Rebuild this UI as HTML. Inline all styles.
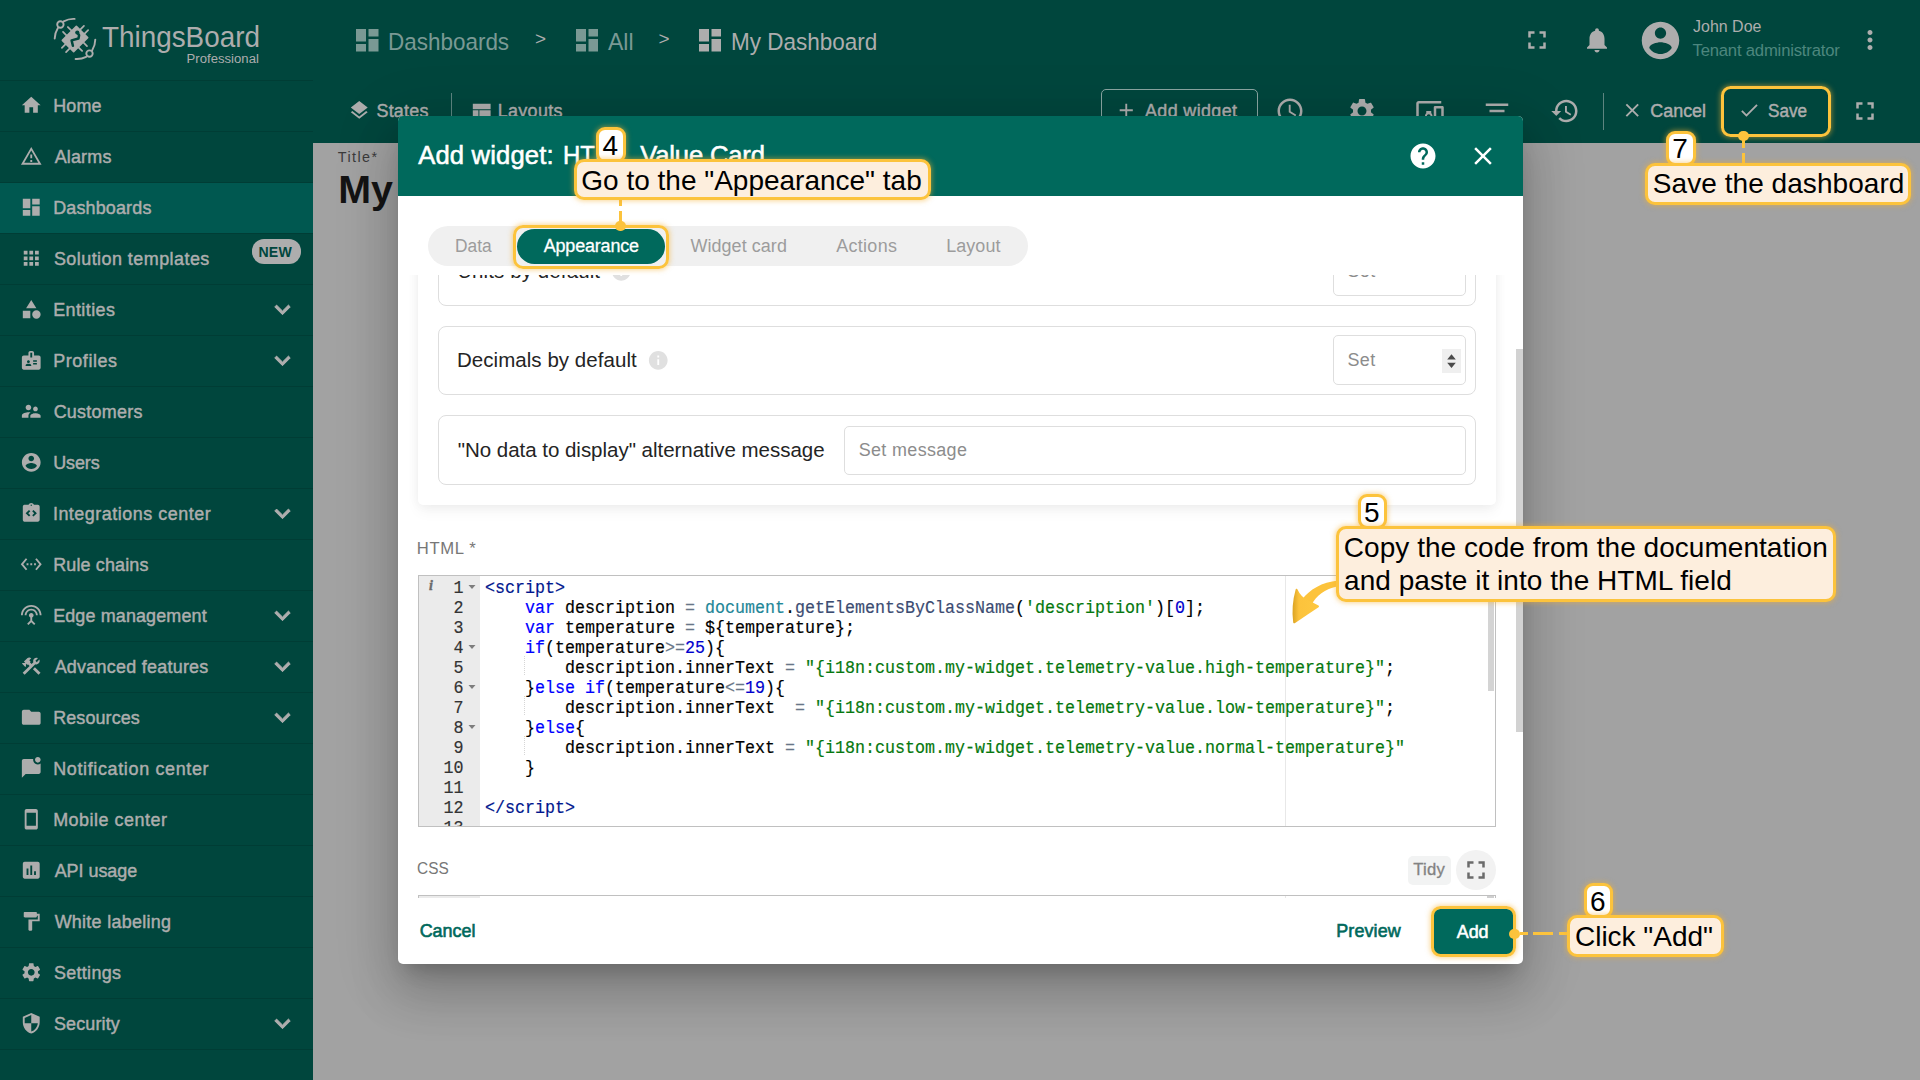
<!DOCTYPE html>
<html lang="en">
<head>
<meta charset="utf-8">
<title>ThingsBoard - Add widget</title>
<style>
html,body{margin:0;padding:0;}
body{width:1920px;height:1080px;overflow:hidden;position:relative;background:#a2a2a2;font-family:"Liberation Sans",sans-serif;}
.t{position:absolute;white-space:pre;display:block;}
.ic{position:absolute;display:block;}
.abs{position:absolute;}
.sans{font-family:"Liberation Sans",sans-serif;}
.mono{font-family:"Liberation Mono",monospace;}
.serif{font-family:"Liberation Serif",serif;}
.cl{position:absolute;height:20px;line-height:20px;font-size:19.0px;white-space:pre;transform:scaleX(0.8770);transform-origin:0 0;-webkit-text-stroke:0.2px currentColor;}

</style>
</head>
<body>
<nav style="position:absolute;left:0;top:0;width:313px;height:1080px;background:#00463d;">
<svg class="ic" style="left:50px;top:12px" width="52" height="52" viewBox="50 12 52 52" fill="none" stroke="#adadad" stroke-width="1.9" stroke-linecap="round">
<path d="M54.7 38.6 A20.3 20.3 0 0 1 57.9 28"/><path d="M63.7 21.3 A20.3 20.3 0 0 1 74.6 18.9"/>
<circle cx="60.4" cy="24.5" r="3.2"/>
<path d="M95.3 39.6 A20.3 20.3 0 0 1 92.2 50.2"/><path d="M86.2 56.8 A20.3 20.3 0 0 1 75.6 59"/>
<circle cx="89.5" cy="53.6" r="3.2"/>
<g transform="translate(75 39) rotate(-45)">
<rect x="-10.7" y="-8.8" width="21.4" height="17.6" rx="0.8" fill="#adadad" stroke="none"/>
<path stroke-width="1.75" d="M-3.45 -8v-5.5M3.45 -8v-5.5M-3.45 8v5.5M3.45 8v5.5M-10 -2.95h-5.6M-10 2.95h-5.6M10 -2.95h5.6M10 2.95h5.6"/>
</g>
<path d="M77.2 32.300 L79.100 35.200 L78.500 38.500 L71.600 40.400 L72.900 45.800" stroke="#00463d" stroke-width="2.5" stroke-linejoin="round"/>
<circle cx="77.300" cy="32.600" r="2.100" fill="#00463d" stroke="none"/>
</svg>
<span id="t0" class="t sans" style="left:101.78px;top:22.77px;font-size:29.21px;line-height:29.21px;font-weight:400;color:#adadad;letter-spacing:0.000px;transform:scaleX(0.9540);transform-origin:0 0;">ThingsBoard</span>
<span id="t1" class="t sans" style="left:186.50px;top:51.69px;font-size:13.12px;line-height:13.12px;font-weight:400;color:#adadad;letter-spacing:0.023px;">Professional</span>
<div style="position:absolute;left:0px;top:80px;width:313px;height:1px;background:#003d35;"></div>
<svg class="ic" style="left:20.00px;top:94.25px;" width="22.5" height="22.5" viewBox="0 0 24 24"><path fill="#adadad" d="M10 20v-6h4v6h5v-8h3L12 3 2 12h3v8z"/></svg>
<span id="t2" class="t sans" style="left:53.15px;top:97.91px;font-size:17.94px;line-height:17.94px;font-weight:400;color:#adadad;letter-spacing:0.200px;-webkit-text-stroke:0.45px #adadad;">Home</span>
<div style="position:absolute;left:0px;top:131px;width:313px;height:1px;background:#003d35;"></div>
<svg class="ic" style="left:20.00px;top:145.25px;" width="22.5" height="22.5" viewBox="0 0 24 24"><path fill="#adadad" d="M12 5.99L19.53 19H4.47L12 5.99M12 2L1 21h22L12 2zm1 14h-2v2h2v-2zm0-6h-2v4h2v-4z"/></svg>
<span id="t3" class="t sans" style="left:54.65px;top:148.91px;font-size:17.94px;line-height:17.94px;font-weight:400;color:#adadad;letter-spacing:0.180px;-webkit-text-stroke:0.45px #adadad;">Alarms</span>
<div style="position:absolute;left:0px;top:183px;width:313px;height:50px;background:#005850;"></div>
<div style="position:absolute;left:0px;top:182px;width:313px;height:1px;background:#003d35;"></div>
<svg class="ic" style="left:20.00px;top:196.25px;" width="22.5" height="22.5" viewBox="0 0 24 24"><path fill="#adadad" d="M3 13h8V3H3v10zm0 8h8v-6H3v6zm10 0h8V11h-8v10zm0-18v6h8V3h-8z"/></svg>
<span id="t4" class="t sans" style="left:53.15px;top:199.91px;font-size:17.94px;line-height:17.94px;font-weight:400;color:#adadad;letter-spacing:0.167px;-webkit-text-stroke:0.45px #adadad;">Dashboards</span>
<div style="position:absolute;left:0px;top:233px;width:313px;height:1px;background:#003d35;"></div>
<svg class="ic" style="left:20.00px;top:247.25px;" width="22.5" height="22.5" viewBox="0 0 24 24"><path fill="#adadad" d="M4 8h4V4H4v4zm6 12h4v-4h-4v4zm-6 0h4v-4H4v4zm0-6h4v-4H4v4zm6 0h4v-4h-4v4zm6-10v4h4V4h-4zm-6 4h4V4h-4v4zm6 6h4v-4h-4v4zm0 6h4v-4h-4v4z"/></svg>
<span id="t5" class="t sans" style="left:53.90px;top:250.91px;font-size:17.94px;line-height:17.94px;font-weight:400;color:#adadad;letter-spacing:0.462px;-webkit-text-stroke:0.45px #adadad;">Solution templates</span>
<div style="position:absolute;left:0px;top:284px;width:313px;height:1px;background:#003d35;"></div>
<svg class="ic" style="left:20.00px;top:298.25px;" width="22.5" height="22.5" viewBox="0 0 24 24"><path fill="#adadad" d="M12 2l-5.5 9h11zM17.5 13a4.5 4.5 0 1 0 0 9a4.5 4.5 0 1 0 0-9zM3 13.5h8v8H3z"/></svg>
<span id="t6" class="t sans" style="left:53.15px;top:301.91px;font-size:17.94px;line-height:17.94px;font-weight:400;color:#adadad;letter-spacing:0.421px;-webkit-text-stroke:0.45px #adadad;">Entities</span>
<svg class="ic" style="left:267.25px;top:294.00px" width="31" height="31" viewBox="0 0 24 24"><path fill="#adadad" stroke="#adadad" stroke-width="0.75" stroke-linejoin="miter" d="M16.59 8.59L12 13.17 7.41 8.59 6 10l6 6 6-6z"/></svg>
<div style="position:absolute;left:0px;top:335px;width:313px;height:1px;background:#003d35;"></div>
<svg class="ic" style="left:20.00px;top:349.25px;" width="22.5" height="22.5" viewBox="0 0 24 24"><path fill="#adadad" d="M20 7h-5V4c0-1.1-.9-2-2-2h-2c-1.1 0-2 .9-2 2v3H4c-1.1 0-2 .9-2 2v11c0 1.1.9 2 2 2h16c1.1 0 2-.9 2-2V9c0-1.1-.9-2-2-2zM9 12c.83 0 1.5.67 1.5 1.5S9.83 15 9 15s-1.5-.67-1.5-1.5S8.17 12 9 12zm3 6H6v-.75c0-1 2-1.5 3-1.5s3 .5 3 1.5V18zm1-9h-2V4h2v5zm5 7.5h-4V15h4v1.5zm0-3h-4V12h4v1.5z"/></svg>
<span id="t7" class="t sans" style="left:53.15px;top:352.91px;font-size:17.94px;line-height:17.94px;font-weight:400;color:#adadad;letter-spacing:0.586px;-webkit-text-stroke:0.45px #adadad;">Profiles</span>
<svg class="ic" style="left:267.25px;top:345.00px" width="31" height="31" viewBox="0 0 24 24"><path fill="#adadad" stroke="#adadad" stroke-width="0.75" stroke-linejoin="miter" d="M16.59 8.59L12 13.17 7.41 8.59 6 10l6 6 6-6z"/></svg>
<div style="position:absolute;left:0px;top:386px;width:313px;height:1px;background:#003d35;"></div>
<svg class="ic" style="left:20.00px;top:400.25px;" width="22.5" height="22.5" viewBox="0 0 24 24"><path fill="#adadad" d="M16.5 12c1.38 0 2.49-1.12 2.49-2.5S17.88 7 16.5 7C15.12 7 14 8.12 14 9.5s1.12 2.5 2.5 2.5zM9 11c1.66 0 2.99-1.34 2.99-3S10.66 5 9 5C7.34 5 6 6.34 6 8s1.34 3 3 3zm7.5 3c-1.83 0-5.5.92-5.5 2.75V19h11v-2.25c0-1.83-3.67-2.75-5.5-2.75zM9 13c-2.33 0-7 1.17-7 3.5V19h7v-2.25c0-.85.33-2.34 2.37-3.47C10.5 13.1 9.66 13 9 13z"/></svg>
<span id="t8" class="t sans" style="left:53.65px;top:403.91px;font-size:17.94px;line-height:17.94px;font-weight:400;color:#adadad;letter-spacing:0.262px;-webkit-text-stroke:0.45px #adadad;">Customers</span>
<div style="position:absolute;left:0px;top:437px;width:313px;height:1px;background:#003d35;"></div>
<svg class="ic" style="left:20.00px;top:451.25px;" width="22.5" height="22.5" viewBox="0 0 24 24"><path fill="#adadad" d="M12 2C6.48 2 2 6.48 2 12s4.48 10 10 10 10-4.48 10-10S17.52 2 12 2zm0 3c1.66 0 3 1.34 3 3s-1.34 3-3 3-3-1.34-3-3 1.34-3 3-3zm0 14.2c-2.5 0-4.71-1.28-6-3.22.03-1.99 4-3.08 6-3.08 1.99 0 5.97 1.09 6 3.08-1.29 1.94-3.5 3.22-6 3.22z"/></svg>
<span id="t9" class="t sans" style="left:53.15px;top:454.91px;font-size:17.94px;line-height:17.94px;font-weight:400;color:#adadad;letter-spacing:-0.062px;-webkit-text-stroke:0.45px #adadad;">Users</span>
<div style="position:absolute;left:0px;top:488px;width:313px;height:1px;background:#003d35;"></div>
<svg class="ic" style="left:20.00px;top:502.25px;" width="22.5" height="22.5" viewBox="0 0 24 24"><path fill="#adadad" d="M19 3h-4.18C14.4 1.84 13.3 1 12 1s-2.4.84-2.82 2H5c-.14 0-.27.01-.4.04-.39.08-.74.28-1.01.55-.18.18-.33.4-.43.64-.1.23-.16.49-.16.77v14c0 .27.06.54.16.78s.25.45.43.64c.27.27.62.47 1.01.55.13.02.26.03.4.03h14c1.1 0 2-.9 2-2V5c0-1.1-.9-2-2-2zM11 14.17l-1.41 1.42L6 12l3.59-3.59L11 9.83 8.83 12 11 14.17zm1-9.92c-.41 0-.75-.34-.75-.75s.34-.75.75-.75.75.34.75.75-.34.75-.75.75zm2.41 11.34L13 14.17 15.17 12 13 9.83l1.41-1.42L18 12l-3.59 3.59z"/></svg>
<span id="t10" class="t sans" style="left:52.90px;top:505.91px;font-size:17.94px;line-height:17.94px;font-weight:400;color:#adadad;letter-spacing:0.511px;-webkit-text-stroke:0.45px #adadad;">Integrations center</span>
<svg class="ic" style="left:267.25px;top:498.00px" width="31" height="31" viewBox="0 0 24 24"><path fill="#adadad" stroke="#adadad" stroke-width="0.75" stroke-linejoin="miter" d="M16.59 8.59L12 13.17 7.41 8.59 6 10l6 6 6-6z"/></svg>
<div style="position:absolute;left:0px;top:539px;width:313px;height:1px;background:#003d35;"></div>
<svg class="ic" style="left:20.00px;top:553.25px;" width="22.5" height="22.5" viewBox="0 0 24 24"><path fill="#adadad" d="M7.77 6.76L6.23 5.48.82 12l5.41 6.52 1.54-1.28L3.42 12l4.35-5.24zM7 13h2v-2H7v2zm10-2h-2v2h2v-2zm-6 2h2v-2h-2v2zm6.77-7.52l-1.54 1.28L20.58 12l-4.35 5.24 1.54 1.28L23.18 12l-5.41-6.52z"/></svg>
<span id="t11" class="t sans" style="left:53.15px;top:556.91px;font-size:17.94px;line-height:17.94px;font-weight:400;color:#adadad;letter-spacing:0.160px;-webkit-text-stroke:0.45px #adadad;">Rule chains</span>
<div style="position:absolute;left:0px;top:590px;width:313px;height:1px;background:#003d35;"></div>
<svg class="ic" style="left:20.00px;top:604.25px;" width="22.5" height="22.5" viewBox="0 0 24 24"><path fill="#adadad" d="M12 5c-3.87 0-7 3.13-7 7h2c0-2.76 2.24-5 5-5s5 2.24 5 5h2c0-3.87-3.13-7-7-7zm1 9.29c.88-.39 1.5-1.26 1.5-2.29 0-1.38-1.12-2.5-2.5-2.5S9.5 10.62 9.5 12c0 1.02.62 1.9 1.5 2.29v3.3L7.59 21 9 22.41l3-3 3 3L16.41 21 13 17.59v-3.3zM12 1C5.93 1 1 5.93 1 12h2c0-4.97 4.03-9 9-9s9 4.03 9 9h2c0-6.07-4.93-11-11-11z"/></svg>
<span id="t12" class="t sans" style="left:53.15px;top:607.91px;font-size:17.94px;line-height:17.94px;font-weight:400;color:#adadad;letter-spacing:0.136px;-webkit-text-stroke:0.45px #adadad;">Edge management</span>
<svg class="ic" style="left:267.25px;top:600.00px" width="31" height="31" viewBox="0 0 24 24"><path fill="#adadad" stroke="#adadad" stroke-width="0.75" stroke-linejoin="miter" d="M16.59 8.59L12 13.17 7.41 8.59 6 10l6 6 6-6z"/></svg>
<div style="position:absolute;left:0px;top:641px;width:313px;height:1px;background:#003d35;"></div>
<svg class="ic" style="left:20.00px;top:655.25px;" width="22.5" height="22.5" viewBox="0 0 24 24"><path fill="#adadad" d="M13.78 15.17l2.12-2.12 6 6-2.12 2.12zM17.5 10c1.93 0 3.5-1.57 3.5-3.5 0-.58-.16-1.12-.41-1.6l-2.7 2.7-1.49-1.49 2.7-2.7c-.48-.25-1.02-.41-1.6-.41C15.57 3 14 4.57 14 6.5c0 .41.08.8.21 1.16l-1.85 1.85-1.78-1.78.71-.71-1.41-1.41L12 3.49c-1.17-1.17-3.07-1.17-4.24 0L4.22 7.03l1.41 1.41H2.81l-.71.71 3.54 3.54.71-.71V9.15l1.41 1.41.71-.71 1.78 1.78-7.41 7.41 2.12 2.12L16.34 9.79c.36.13.75.21 1.16.21z"/></svg>
<span id="t13" class="t sans" style="left:54.65px;top:658.91px;font-size:17.94px;line-height:17.94px;font-weight:400;color:#adadad;letter-spacing:0.256px;-webkit-text-stroke:0.45px #adadad;">Advanced features</span>
<svg class="ic" style="left:267.25px;top:651.00px" width="31" height="31" viewBox="0 0 24 24"><path fill="#adadad" stroke="#adadad" stroke-width="0.75" stroke-linejoin="miter" d="M16.59 8.59L12 13.17 7.41 8.59 6 10l6 6 6-6z"/></svg>
<div style="position:absolute;left:0px;top:692px;width:313px;height:1px;background:#003d35;"></div>
<svg class="ic" style="left:20.00px;top:706.25px;" width="22.5" height="22.5" viewBox="0 0 24 24"><path fill="#adadad" d="M10 4H4c-1.1 0-1.99.9-1.99 2L2 18c0 1.1.9 2 2 2h16c1.1 0 2-.9 2-2V8c0-1.1-.9-2-2-2h-8l-2-2z"/></svg>
<span id="t14" class="t sans" style="left:53.15px;top:709.91px;font-size:17.94px;line-height:17.94px;font-weight:400;color:#adadad;letter-spacing:0.113px;-webkit-text-stroke:0.45px #adadad;">Resources</span>
<svg class="ic" style="left:267.25px;top:702.00px" width="31" height="31" viewBox="0 0 24 24"><path fill="#adadad" stroke="#adadad" stroke-width="0.75" stroke-linejoin="miter" d="M16.59 8.59L12 13.17 7.41 8.59 6 10l6 6 6-6z"/></svg>
<div style="position:absolute;left:0px;top:743px;width:313px;height:1px;background:#003d35;"></div>
<svg class="ic" style="left:20.00px;top:757.25px;" width="22.5" height="22.5" viewBox="0 0 24 24"><path fill="#adadad" d="M22 6.98V16c0 1.1-.9 2-2 2H6l-4 4V4c0-1.1.9-2 2-2h10.1c-.06.32-.1.66-.1 1 0 2.76 2.24 5 5 5 1.13 0 2.16-.39 3-1.02zM16 3c0 1.66 1.34 3 3 3s3-1.34 3-3-1.34-3-3-3-3 1.34-3 3z"/></svg>
<span id="t15" class="t sans" style="left:53.15px;top:760.91px;font-size:17.94px;line-height:17.94px;font-weight:400;color:#adadad;letter-spacing:0.658px;-webkit-text-stroke:0.45px #adadad;">Notification center</span>
<div style="position:absolute;left:0px;top:794px;width:313px;height:1px;background:#003d35;"></div>
<svg class="ic" style="left:20.00px;top:808.25px;" width="22.5" height="22.5" viewBox="0 0 24 24"><path fill="#adadad" d="M17 1.01L7 1c-1.1 0-2 .9-2 2v18c0 1.1.9 2 2 2h10c1.1 0 2-.9 2-2V3c0-1.1-.9-1.99-2-1.99zM17 19H7V5h10v14z"/></svg>
<span id="t16" class="t sans" style="left:53.15px;top:811.91px;font-size:17.94px;line-height:17.94px;font-weight:400;color:#adadad;letter-spacing:0.504px;-webkit-text-stroke:0.45px #adadad;">Mobile center</span>
<div style="position:absolute;left:0px;top:845px;width:313px;height:1px;background:#003d35;"></div>
<svg class="ic" style="left:20.00px;top:859.25px;" width="22.5" height="22.5" viewBox="0 0 24 24"><path fill="#adadad" d="M19 3H5c-1.1 0-2 .9-2 2v14c0 1.1.9 2 2 2h14c1.1 0 2-.9 2-2V5c0-1.1-.9-2-2-2zM9 17H7v-7h2v7zm4 0h-2V7h2v10zm4 0h-2v-4h2v4z"/></svg>
<span id="t17" class="t sans" style="left:54.65px;top:862.91px;font-size:17.94px;line-height:17.94px;font-weight:400;color:#adadad;letter-spacing:-0.025px;-webkit-text-stroke:0.45px #adadad;">API usage</span>
<div style="position:absolute;left:0px;top:896px;width:313px;height:1px;background:#003d35;"></div>
<svg class="ic" style="left:20.00px;top:910.25px;" width="22.5" height="22.5" viewBox="0 0 24 24"><path fill="#adadad" d="M18 4V3c0-.55-.45-1-1-1H5c-.55 0-1 .45-1 1v4c0 .55.45 1 1 1h12c.55 0 1-.45 1-1V6h1v4H9v11c0 .55.45 1 1 1h2c.55 0 1-.45 1-1v-9h8V4h-3z"/></svg>
<span id="t18" class="t sans" style="left:54.65px;top:913.91px;font-size:17.94px;line-height:17.94px;font-weight:400;color:#adadad;letter-spacing:0.277px;-webkit-text-stroke:0.45px #adadad;">White labeling</span>
<div style="position:absolute;left:0px;top:947px;width:313px;height:1px;background:#003d35;"></div>
<svg class="ic" style="left:20.00px;top:961.25px;" width="22.5" height="22.5" viewBox="0 0 24 24"><path fill="#adadad" d="M19.14 12.94c.04-.3.06-.61.06-.94 0-.32-.02-.64-.07-.94l2.03-1.58c.18-.14.23-.41.12-.61l-1.92-3.32c-.12-.22-.37-.29-.59-.22l-2.39.96c-.5-.38-1.03-.7-1.62-.94l-.36-2.54c-.04-.24-.24-.41-.48-.41h-3.84c-.24 0-.43.17-.47.41l-.36 2.54c-.59.24-1.13.57-1.62.94l-2.39-.96c-.22-.08-.47 0-.59.22L2.74 8.87c-.12.21-.08.47.12.61l2.03 1.58c-.05.3-.09.63-.09.94s.02.64.07.94l-2.03 1.58c-.18.14-.23.41-.12.61l1.92 3.32c.12.22.37.29.59.22l2.39-.96c.5.38 1.03.7 1.62.94l.36 2.54c.05.24.24.41.48.41h3.84c.24 0 .44-.17.47-.41l.36-2.54c.59-.24 1.13-.56 1.62-.94l2.39.96c.22.08.47 0 .59-.22l1.92-3.32c.12-.22.07-.47-.12-.61l-2.01-1.58zM12 15.6c-1.98 0-3.6-1.62-3.6-3.6s1.62-3.6 3.6-3.6 3.6 1.62 3.6 3.6-1.62 3.6-3.6 3.6z"/></svg>
<span id="t19" class="t sans" style="left:53.90px;top:964.91px;font-size:17.94px;line-height:17.94px;font-weight:400;color:#adadad;letter-spacing:0.329px;-webkit-text-stroke:0.45px #adadad;">Settings</span>
<div style="position:absolute;left:0px;top:998px;width:313px;height:1px;background:#003d35;"></div>
<svg class="ic" style="left:20.00px;top:1012.25px;" width="22.5" height="22.5" viewBox="0 0 24 24"><path fill="#adadad" d="M12 1L3 5v6c0 5.55 3.84 10.74 9 12 5.16-1.26 9-6.45 9-12V5l-9-4zm0 10.99h7c-.53 4.12-3.28 7.79-7 8.94V12H5V6.3l7-3.11v8.8z"/></svg>
<span id="t20" class="t sans" style="left:53.90px;top:1015.91px;font-size:17.94px;line-height:17.94px;font-weight:400;color:#adadad;letter-spacing:0.157px;-webkit-text-stroke:0.45px #adadad;">Security</span>
<svg class="ic" style="left:267.25px;top:1008.00px" width="31" height="31" viewBox="0 0 24 24"><path fill="#adadad" stroke="#adadad" stroke-width="0.75" stroke-linejoin="miter" d="M16.59 8.59L12 13.17 7.41 8.59 6 10l6 6 6-6z"/></svg>
<div style="position:absolute;left:0px;top:1049px;width:313px;height:1px;background:#003d35;"></div>
<div style="position:absolute;left:251.5px;top:239.2px;width:49.0px;height:24.400000000000034px;background:#adadad;border-radius:12px;"></div>
<span id="t21" class="t sans" style="left:258.50px;top:244.67px;font-size:14.09px;line-height:14.09px;font-weight:700;color:#00463d;letter-spacing:0.175px;">NEW</span>
</nav>
<header style="position:absolute;left:313px;top:0;width:1607px;height:143px;background:#00463d;">
</header>
<svg class="ic" style="left:356px;top:29px" width="22.5" height="22.5" fill="#7a9994"><rect x="0.00" y="0.00" width="10.00" height="12.50"/><rect x="0.00" y="15.00" width="10.00" height="7.50"/><rect x="12.50" y="0.00" width="10.00" height="7.50"/><rect x="12.50" y="10.00" width="10.00" height="12.50"/></svg>
<span id="t22" class="t sans" style="left:388.25px;top:31.08px;font-size:23.06px;line-height:23.06px;font-weight:400;color:#7a9994;letter-spacing:0.000px;transform:scaleX(0.9745);transform-origin:0 0;">Dashboards</span>
<span id="t23" class="t sans" style="left:535.00px;top:30.25px;font-size:18.96px;line-height:18.96px;font-weight:400;color:#adadad;letter-spacing:0.000px;">&gt;</span>
<svg class="ic" style="left:575.6px;top:29px" width="22.5" height="22.5" fill="#7a9994"><rect x="0.00" y="0.00" width="10.00" height="12.50"/><rect x="0.00" y="15.00" width="10.00" height="7.50"/><rect x="12.50" y="0.00" width="10.00" height="7.50"/><rect x="12.50" y="10.00" width="10.00" height="12.50"/></svg>
<span id="t24" class="t sans" style="left:608.00px;top:31.08px;font-size:23.06px;line-height:23.06px;font-weight:400;color:#7a9994;letter-spacing:0.000px;">All</span>
<span id="t25" class="t sans" style="left:658.50px;top:30.25px;font-size:18.96px;line-height:18.96px;font-weight:400;color:#adadad;letter-spacing:0.000px;">&gt;</span>
<svg class="ic" style="left:698.6px;top:29px" width="22.5" height="22.5" fill="#adadad"><rect x="0.00" y="0.00" width="10.00" height="12.50"/><rect x="0.00" y="15.00" width="10.00" height="7.50"/><rect x="12.50" y="0.00" width="10.00" height="7.50"/><rect x="12.50" y="10.00" width="10.00" height="12.50"/></svg>
<span id="t26" class="t sans" style="left:731.35px;top:31.08px;font-size:23.06px;line-height:23.06px;font-weight:400;color:#adadad;letter-spacing:0.000px;transform:scaleX(0.9761);transform-origin:0 0;">My Dashboard</span>
<svg class="ic" style="left:1522.20px;top:25.00px;" width="30" height="30" viewBox="0 0 24 24"><path fill="#adadad" d="M7 14H5v5h5v-2H7v-3zm-2-4h2V7h3V5H5v5zm12 7h-3v2h5v-5h-2v3zM14 5v2h3v3h2V5h-5z"/></svg>
<svg class="ic" style="left:1582.30px;top:25.30px;" width="30" height="30" viewBox="0 0 24 24"><path fill="#adadad" d="M12 22c1.1 0 2-.9 2-2h-4c0 1.1.89 2 2 2zm6-6v-5c0-3.07-1.64-5.64-4.5-6.32V4c0-.83-.67-1.5-1.5-1.5s-1.5.67-1.5 1.5v.68C7.63 5.36 6 7.92 6 11v5l-2 2v1h16v-1l-2-2z"/></svg>
<svg class="ic" style="left:1637.50px;top:17.70px;" width="45" height="45" viewBox="0 0 24 24"><path fill="#adadad" d="M12 2C6.48 2 2 6.48 2 12s4.48 10 10 10 10-4.48 10-10S17.52 2 12 2zm0 3c1.66 0 3 1.34 3 3s-1.34 3-3 3-3-1.34-3-3 1.34-3 3-3zm0 14.2c-2.5 0-4.71-1.28-6-3.22.03-1.99 4-3.08 6-3.08 1.99 0 5.97 1.09 6 3.08-1.29 1.94-3.5 3.22-6 3.22z"/></svg>
<span id="t27" class="t sans" style="left:1692.76px;top:18.70px;font-size:16.66px;line-height:16.66px;font-weight:400;color:#adadad;letter-spacing:0.000px;transform:scaleX(0.9594);transform-origin:0 0;">John Doe</span>
<span id="t28" class="t sans" style="left:1692.50px;top:43.20px;font-size:16.66px;line-height:16.66px;font-weight:400;color:#4d867e;letter-spacing:-0.192px;">Tenant administrator</span>
<svg class="ic" style="left:1854.80px;top:25.00px;" width="30" height="30" viewBox="0 0 24 24"><path fill="#adadad" d="M12 8c1.1 0 2-.9 2-2s-.9-2-2-2-2 .9-2 2 .9 2 2 2zm0 2c-1.1 0-2 .9-2 2s.9 2 2 2 2-.9 2-2-.9-2-2-2zm0 6c-1.1 0-2 .9-2 2s.9 2 2 2 2-.9 2-2-.9-2-2-2z"/></svg>
<svg class="ic" style="left:348.05px;top:99.25px;" width="22.5" height="22.5" viewBox="0 0 24 24"><path fill="#adadad" d="M11.99 18.54l-7.37-5.73L3 14.07l9 7 9-7-1.63-1.27-7.38 5.74zM12 16l7.36-5.73L21 9l-9-7-9 7 1.63 1.27L12 16z"/></svg>
<span id="t29" class="t sans" style="left:376.50px;top:103.01px;font-size:17.94px;line-height:17.94px;font-weight:400;color:#adadad;letter-spacing:0.200px;-webkit-text-stroke:0.45px #adadad;">States</span>
<div style="position:absolute;left:451px;top:93px;width:1px;height:37px;background:#5d8580;"></div>
<svg class="ic" style="left:469.75px;top:99.25px;" width="22.5" height="22.5" viewBox="0 0 24 24"><path fill="#adadad" d="M3 19h6v-7H3v7zm7 0h12v-7H10v7zM3 5v6h19V5H3z"/></svg>
<span id="t30" class="t sans" style="left:497.65px;top:103.01px;font-size:17.94px;line-height:17.94px;font-weight:400;color:#adadad;letter-spacing:0.342px;-webkit-text-stroke:0.45px #adadad;">Layouts</span>
<div style="position:absolute;left:1101px;top:89px;width:156.5px;height:44px;box-sizing:border-box;border:1px solid #8aa5a1;border-radius:5px;"></div>
<svg class="ic" style="left:1115.05px;top:99.25px;" width="22.5" height="22.5" viewBox="0 0 24 24"><path fill="#adadad" d="M19 13h-6v6h-2v-6H5v-2h6V5h2v6h6v2z"/></svg>
<span id="t31" class="t sans" style="left:1145.05px;top:103.01px;font-size:17.94px;line-height:17.94px;font-weight:400;color:#adadad;letter-spacing:0.356px;-webkit-text-stroke:0.45px #adadad;">Add widget</span>
<svg class="ic" style="left:1275.00px;top:95.50px;" width="30" height="30" viewBox="0 0 24 24"><path fill="#adadad" d="M11.99 2C6.47 2 2 6.48 2 12s4.47 10 9.99 10C17.52 22 22 17.52 22 12S17.52 2 11.99 2zM12 20c-4.42 0-8-3.58-8-8s3.58-8 8-8 8 3.58 8 8-3.58 8-8 8zm.5-13H11v6l5.25 3.15.75-1.23-4.5-2.67z"/></svg>
<svg class="ic" style="left:1347.00px;top:95.50px;" width="30" height="30" viewBox="0 0 24 24"><path fill="#adadad" d="M19.14 12.94c.04-.3.06-.61.06-.94 0-.32-.02-.64-.07-.94l2.03-1.58c.18-.14.23-.41.12-.61l-1.92-3.32c-.12-.22-.37-.29-.59-.22l-2.39.96c-.5-.38-1.03-.7-1.62-.94l-.36-2.54c-.04-.24-.24-.41-.48-.41h-3.84c-.24 0-.43.17-.47.41l-.36 2.54c-.59.24-1.13.57-1.62.94l-2.39-.96c-.22-.08-.47 0-.59.22L2.74 8.87c-.12.21-.08.47.12.61l2.03 1.58c-.05.3-.09.63-.09.94s.02.64.07.94l-2.03 1.58c-.18.14-.23.41-.12.61l1.92 3.32c.12.22.37.29.59.22l2.39-.96c.5.38 1.03.7 1.62.94l.36 2.54c.05.24.24.41.48.41h3.84c.24 0 .44-.17.47-.41l.36-2.54c.59-.24 1.13-.56 1.62-.94l2.39.96c.22.08.47 0 .59-.22l1.92-3.32c.12-.22.07-.47-.12-.61l-2.01-1.58zM12 15.6c-1.98 0-3.6-1.62-3.6-3.6s1.62-3.6 3.6-3.6 3.6 1.62 3.6 3.6-1.62 3.6-3.6 3.6z"/></svg>
<svg class="ic" style="left:1415.00px;top:95.50px;" width="30" height="30" viewBox="0 0 24 24"><path fill="#adadad" d="M3 6h18V4H3c-1.1 0-2 .9-2 2v12c0 1.1.9 2 2 2h4v-2H3V6zm10 6H9v1.78c-.61.55-1 1.33-1 2.22s.39 1.67 1 2.22V20h4v-1.78c.61-.55 1-1.34 1-2.22s-.39-1.67-1-2.22V12zm-2 5.5c-.83 0-1.5-.67-1.5-1.5s.67-1.5 1.5-1.5 1.5.67 1.5 1.5-.67 1.5-1.5 1.5zM22 8h-6c-.5 0-1 .5-1 1v10c0 .5.5 1 1 1h6c.5 0 1-.5 1-1V9c0-.5-.5-1-1-1zm-1 10h-4v-8h4v8z"/></svg>
<svg class="ic" style="left:1482.00px;top:95.50px;" width="30" height="30" viewBox="0 0 24 24"><path fill="#adadad" d="M10 18h4v-2h-4v2zM3 6v2h18V6H3zm3 7h12v-2H6v2z"/></svg>
<svg class="ic" style="left:1549.80px;top:95.50px;" width="30" height="30" viewBox="0 0 24 24"><path fill="#adadad" d="M13 3c-4.97 0-9 4.03-9 9H1l3.89 3.89.07.14L9 12H6c0-3.87 3.13-7 7-7s7 3.13 7 7-3.13 7-7 7c-1.93 0-3.68-.79-4.94-2.06l-1.42 1.42C8.27 19.99 10.51 21 13 21c4.97 0 9-4.03 9-9s-4.03-9-9-9zm-1 5v5l4.28 2.54.72-1.21-3.5-2.08V8H12z"/></svg>
<div style="position:absolute;left:1603px;top:93px;width:1px;height:37px;background:#5d8580;"></div>
<svg class="ic" style="left:1620.75px;top:99.25px;" width="22.5" height="22.5" viewBox="0 0 24 24"><path fill="#adadad" d="M19 6.41L17.59 5 12 10.59 6.41 5 5 6.41 10.59 12 5 17.59 6.41 19 12 13.41 17.59 19 19 17.59 13.41 12z"/></svg>
<span id="t32" class="t sans" style="left:1650.25px;top:103.01px;font-size:17.94px;line-height:17.94px;font-weight:400;color:#adadad;letter-spacing:-0.010px;-webkit-text-stroke:0.45px #adadad;">Cancel</span>
<svg class="ic" style="left:1737.75px;top:99.25px;" width="22.5" height="22.5" viewBox="0 0 24 24"><path fill="#adadad" d="M9 16.17L4.83 12l-1.42 1.41L9 19 21 7l-1.41-1.41z"/></svg>
<span id="t33" class="t sans" style="left:1768.12px;top:103.01px;font-size:17.94px;line-height:17.94px;font-weight:400;color:#adadad;letter-spacing:0.000px;-webkit-text-stroke:0.45px #adadad;transform:scaleX(0.9560);transform-origin:0 0;">Save</span>
<svg class="ic" style="left:1850.00px;top:95.50px;" width="30" height="30" viewBox="0 0 24 24"><path fill="#adadad" d="M7 14H5v5h5v-2H7v-3zm-2-4h2V7h3V5H5v5zm12 7h-3v2h5v-5h-2v3zM14 5v2h3v3h2V5h-5z"/></svg>
<span id="t34" class="t sans" style="left:337.75px;top:149.55px;font-size:14.35px;line-height:14.35px;font-weight:400;color:#3b3b3b;letter-spacing:1.440px;">Title*</span>
<span id="t35" class="t sans" style="left:338.25px;top:170.45px;font-size:39.4px;line-height:39.4px;font-weight:700;color:#141414;letter-spacing:0.000px;">My Dashboard</span><section style="position:absolute;left:398px;top:116px;width:1125px;height:848px;background:#fff;border-radius:5px;box-shadow:0 14px 19px -9px rgba(0,0,0,.2),0 30px 48px 4px rgba(0,0,0,.14),0 11px 58px 10px rgba(0,0,0,.12);"></section>
<div style="position:absolute;left:398px;top:116px;width:1125px;height:80px;background:#00695c;border-radius:5px 5px 0 0;"></div>
<span id="t36" class="t sans" style="left:418.25px;top:142.91px;font-size:25.62px;line-height:25.62px;font-weight:400;color:#fff;letter-spacing:0.150px;-webkit-text-stroke:0.55px #fff;">Add widget:</span>
<span id="t37" class="t sans" style="left:563.26px;top:142.91px;font-size:25.62px;line-height:25.62px;font-weight:400;color:#fff;letter-spacing:0.000px;-webkit-text-stroke:0.55px #fff;transform:scaleX(0.9348);transform-origin:0 0;">HTML</span>
<span id="t38" class="t sans" style="left:640.25px;top:142.91px;font-size:25.62px;line-height:25.62px;font-weight:400;color:#fff;letter-spacing:-0.172px;-webkit-text-stroke:0.55px #fff;">Value Card</span>
<svg class="ic" style="left:1407.50px;top:141.00px;" width="30" height="30" viewBox="0 0 24 24"><path fill="#fff" d="M12 2C6.48 2 2 6.48 2 12s4.48 10 10 10 10-4.48 10-10S17.52 2 12 2zm1 17h-2v-2h2v2zm2.07-7.75l-.9.92C13.45 12.9 13 13.5 13 15h-2v-.5c0-1.1.45-2.1 1.17-2.83l1.24-1.26c.37-.36.59-.86.59-1.41 0-1.1-.9-2-2-2s-2 .9-2 2H8c0-2.21 1.79-4 4-4s4 1.79 4 4c0 .88-.36 1.68-.93 2.25z"/></svg>
<svg class="ic" style="left:1467.50px;top:141.00px;" width="30" height="30" viewBox="0 0 24 24"><path fill="#fff" d="M19 6.41L17.59 5 12 10.59 6.41 5 5 6.41 10.59 12 5 17.59 6.41 19 12 13.41 17.59 19 19 17.59 13.41 12z"/></svg>
<div style="position:absolute;left:428px;top:226.2px;width:600px;height:39.60000000000002px;background:#f0f0f0;border-radius:20px;"></div>
<div style="position:absolute;left:516.8px;top:228.6px;width:148.70000000000005px;height:35.79999999999998px;background:#00695c;border-radius:17.5px;"></div>
<span id="t39" class="t sans" style="left:454.85px;top:237.81px;font-size:17.94px;line-height:17.94px;font-weight:400;color:#9c9c9c;letter-spacing:0.000px;transform:scaleX(0.9671);transform-origin:0 0;">Data</span>
<span id="t40" class="t sans" style="left:543.75px;top:238.01px;font-size:17.94px;line-height:17.94px;font-weight:400;color:#fff;letter-spacing:-0.167px;-webkit-text-stroke:0.3px #fff;">Appearance</span>
<span id="t41" class="t sans" style="left:690.45px;top:237.81px;font-size:17.94px;line-height:17.94px;font-weight:400;color:#9c9c9c;letter-spacing:0.075px;">Widget card</span>
<span id="t42" class="t sans" style="left:836.30px;top:237.81px;font-size:17.94px;line-height:17.94px;font-weight:400;color:#9c9c9c;letter-spacing:0.292px;">Actions</span>
<span id="t43" class="t sans" style="left:946.30px;top:237.81px;font-size:17.94px;line-height:17.94px;font-weight:400;color:#9c9c9c;letter-spacing:0.050px;">Layout</span>
<div style="position:absolute;left:398px;top:275px;width:1118px;height:623px;overflow:hidden;">
<div style="position:absolute;left:20px;top:-95px;width:1078px;height:325px;background:#fff;border-radius:5px;box-shadow:0 7px 14px rgba(0,0,0,.045),0 0 12px rgba(0,0,0,.05);"></div>
<div style="position:absolute;left:40px;top:-38px;width:1038px;height:68.5px;box-sizing:border-box;border:1px solid #dedede;border-radius:8px;"></div>
<span id="t44" class="t sans" style="left:59.20px;top:-13.85px;font-size:20.5px;line-height:20.5px;font-weight:400;color:#242424;letter-spacing:0.103px;">Units by default</span>
<svg class="ic" style="left:211.75px;top:-14.75px;" width="22.5" height="22.5" viewBox="0 0 24 24"><path fill="#e0e0e0" d="M12 2C6.48 2 2 6.48 2 12s4.48 10 10 10 10-4.48 10-10S17.52 2 12 2zm1 15h-2v-6h2v6zm0-8h-2V7h2v2z"/></svg>
<div style="position:absolute;left:935px;top:-29px;width:133px;height:50px;box-sizing:border-box;border:1px solid #dedede;border-radius:5px;"></div>
<span id="t45" class="t sans" style="left:949.55px;top:-11.89px;font-size:17.94px;line-height:17.94px;font-weight:400;color:#8c8c8c;letter-spacing:0.350px;">Set</span>
<div style="position:absolute;left:40px;top:51px;width:1038px;height:68.5px;box-sizing:border-box;border:1px solid #dedede;border-radius:8px;"></div>
<span id="t46" class="t sans" style="left:58.95px;top:74.95px;font-size:20.5px;line-height:20.5px;font-weight:400;color:#242424;letter-spacing:0.050px;">Decimals by default</span>
<svg class="ic" style="left:249.15px;top:73.55px;" width="22.5" height="22.5" viewBox="0 0 24 24"><path fill="#e0e0e0" d="M12 2C6.48 2 2 6.48 2 12s4.48 10 10 10 10-4.48 10-10S17.52 2 12 2zm1 15h-2v-6h2v6zm0-8h-2V7h2v2z"/></svg>
<div style="position:absolute;left:935px;top:60px;width:133px;height:49.5px;box-sizing:border-box;border:1px solid #dedede;border-radius:5px;"></div>
<span id="t47" class="t sans" style="left:949.55px;top:76.61px;font-size:17.94px;line-height:17.94px;font-weight:400;color:#8c8c8c;letter-spacing:0.350px;">Set</span>
<div style="position:absolute;left:1044px;top:74px;width:19px;height:24px;background:#efefef;"></div>
<svg class="ic" style="left:1044px;top:74px" width="19" height="24"><path fill="#4a4a4a" d="M9.5 5.2l4.3 5.3h-8.600zM9.5 19l4.300-5.300h-8.600z"/></svg>
<div style="position:absolute;left:40px;top:140px;width:1038px;height:69.5px;box-sizing:border-box;border:1px solid #dedede;border-radius:8px;"></div>
<span id="t48" class="t sans" style="left:59.70px;top:165.25px;font-size:20.5px;line-height:20.5px;font-weight:400;color:#242424;letter-spacing:-0.023px;">&quot;No data to display&quot; alternative message</span>
<div style="position:absolute;left:446px;top:150.5px;width:622px;height:49.0px;box-sizing:border-box;border:1px solid #dedede;border-radius:5px;"></div>
<span id="t49" class="t sans" style="left:460.65px;top:166.81px;font-size:17.94px;line-height:17.94px;font-weight:400;color:#8c8c8c;letter-spacing:0.360px;">Set message</span>
<span id="t50" class="t sans" style="left:18.75px;top:265.60px;font-size:16.66px;line-height:16.66px;font-weight:400;color:#777;letter-spacing:0.610px;">HTML *</span><div style="position:absolute;left:20px;top:300px;width:1078px;height:252px;box-sizing:border-box;border:1px solid #c0c0c0;overflow:hidden;background:#fff;">
<div style="position:absolute;left:0px;top:0px;width:61px;height:250px;background:#ebebeb;"></div>
<div style="position:absolute;left:866px;top:0px;width:1px;height:250px;background:#e8e8e8;"></div>
<div style="position:absolute;left:1069px;top:0px;width:6px;height:115px;background:#d4d4d4;"></div>
<div class="mono cl" style="left:0;top:1.50px;width:44.60px;transform-origin:100% 0;text-align:right;color:#333;">1</div><div class="mono cl" style="left:66.00px;top:1.50px;"><span style="color:#00168e">&lt;script&gt;</span></div><div class="mono cl" style="left:0;top:21.50px;width:44.60px;transform-origin:100% 0;text-align:right;color:#333;">2</div><div class="mono cl" style="left:66.00px;top:21.50px;">    <span style="color:#0000ff">var</span> <span style="color:#000">description</span> <span style="color:#687687">=</span> <span style="color:#1f8798">document</span><span style="color:#000">.</span><span style="color:#3c4c72">getElementsByClassName</span><span style="color:#000">(</span><span style="color:#05780d">&#x27;description&#x27;</span><span style="color:#000">)[</span><span style="color:#0000cd">0</span><span style="color:#000">];</span></div><div class="mono cl" style="left:0;top:41.50px;width:44.60px;transform-origin:100% 0;text-align:right;color:#333;">3</div><div class="mono cl" style="left:66.00px;top:41.50px;">    <span style="color:#0000ff">var</span> <span style="color:#000">temperature</span> <span style="color:#687687">=</span> <span style="color:#000">${temperature};</span></div><div class="mono cl" style="left:0;top:61.50px;width:44.60px;transform-origin:100% 0;text-align:right;color:#333;">4</div><div class="mono cl" style="left:66.00px;top:61.50px;">    <span style="color:#0000ff">if</span><span style="color:#000">(temperature</span><span style="color:#687687">&gt;=</span><span style="color:#0000cd">25</span><span style="color:#000">){</span></div><div class="mono cl" style="left:0;top:81.50px;width:44.60px;transform-origin:100% 0;text-align:right;color:#333;">5</div><div class="mono cl" style="left:66.00px;top:81.50px;">        <span style="color:#000">description.innerText</span> <span style="color:#687687">=</span> <span style="color:#05780d">&quot;{i18n:custom.my-widget.telemetry-value.high-temperature}&quot;</span><span style="color:#000">;</span></div><div class="mono cl" style="left:0;top:101.50px;width:44.60px;transform-origin:100% 0;text-align:right;color:#333;">6</div><div class="mono cl" style="left:66.00px;top:101.50px;">    <span style="color:#000">}</span><span style="color:#0000ff">else</span> <span style="color:#0000ff">if</span><span style="color:#000">(temperature</span><span style="color:#687687">&lt;=</span><span style="color:#0000cd">19</span><span style="color:#000">){</span></div><div class="mono cl" style="left:0;top:121.50px;width:44.60px;transform-origin:100% 0;text-align:right;color:#333;">7</div><div class="mono cl" style="left:66.00px;top:121.50px;">        <span style="color:#000">description.innerText</span>  <span style="color:#687687">=</span> <span style="color:#05780d">&quot;{i18n:custom.my-widget.telemetry-value.low-temperature}&quot;</span><span style="color:#000">;</span></div><div class="mono cl" style="left:0;top:141.50px;width:44.60px;transform-origin:100% 0;text-align:right;color:#333;">8</div><div class="mono cl" style="left:66.00px;top:141.50px;">    <span style="color:#000">}</span><span style="color:#0000ff">else</span><span style="color:#000">{</span></div><div class="mono cl" style="left:0;top:161.50px;width:44.60px;transform-origin:100% 0;text-align:right;color:#333;">9</div><div class="mono cl" style="left:66.00px;top:161.50px;">        <span style="color:#000">description.innerText</span> <span style="color:#687687">=</span> <span style="color:#05780d">&quot;{i18n:custom.my-widget.telemetry-value.normal-temperature}&quot;</span></div><div class="mono cl" style="left:0;top:181.50px;width:44.60px;transform-origin:100% 0;text-align:right;color:#333;">10</div><div class="mono cl" style="left:66.00px;top:181.50px;">    <span style="color:#000">}</span></div><div class="mono cl" style="left:0;top:201.50px;width:44.60px;transform-origin:100% 0;text-align:right;color:#333;">11</div><div class="mono cl" style="left:66.00px;top:201.50px;"></div><div class="mono cl" style="left:0;top:221.50px;width:44.60px;transform-origin:100% 0;text-align:right;color:#333;">12</div><div class="mono cl" style="left:66.00px;top:221.50px;"><span style="color:#00168e">&lt;/script&gt;</span></div><div class="mono cl" style="left:0;top:241.50px;width:44.60px;transform-origin:100% 0;text-align:right;color:#333;">13</div><div class="mono cl" style="left:66.00px;top:241.50px;"></div>
<svg class="ic" style="left:49px;top:8px" width="8" height="6"><path d="M0.500 1h7l-3.500 4z" fill="#7d7d7d"/></svg>
<svg class="ic" style="left:49px;top:68px" width="8" height="6"><path d="M0.500 1h7l-3.500 4z" fill="#7d7d7d"/></svg>
<svg class="ic" style="left:49px;top:108px" width="8" height="6"><path d="M0.500 1h7l-3.500 4z" fill="#7d7d7d"/></svg>
<svg class="ic" style="left:49px;top:148px" width="8" height="6"><path d="M0.500 1h7l-3.500 4z" fill="#7d7d7d"/></svg>
<span class="t serif" style="left:10px;top:2px;font-size:14px;line-height:16px;font-style:italic;font-weight:700;color:#6a6a6a;-webkit-text-stroke:.4px #6a6a6a;">i</span>
<div style="position:absolute;left:105px;top:80px;width:1px;height:20px;background:repeating-linear-gradient(to bottom,#d6d6d6 0 1px,transparent 1px 2px);"></div>
<div style="position:absolute;left:105px;top:120px;width:1px;height:20px;background:repeating-linear-gradient(to bottom,#d6d6d6 0 1px,transparent 1px 2px);"></div>
<div style="position:absolute;left:105px;top:160px;width:1px;height:20px;background:repeating-linear-gradient(to bottom,#d6d6d6 0 1px,transparent 1px 2px);"></div>
</div>
<span id="t51" class="t sans" style="left:19.31px;top:586.40px;font-size:16.66px;line-height:16.66px;font-weight:400;color:#777;letter-spacing:0.000px;transform:scaleX(0.9252);transform-origin:0 0;">CSS</span>
<div style="position:absolute;left:1010px;top:581.2px;width:43px;height:28.5px;background:#f2f3f3;border-radius:5px;"></div>
<span id="t52" class="t sans" style="left:1015.15px;top:587.00px;font-size:16.66px;line-height:16.66px;font-weight:400;color:#828282;letter-spacing:0.283px;-webkit-text-stroke:0.3px #828282;">Tidy</span>
<div style="position:absolute;left:1058px;top:575px;width:40px;height:40px;background:#f2f2f2;border-radius:20px;"></div>
<svg class="ic" style="left:1063.00px;top:580.00px;" width="30" height="30" viewBox="0 0 24 24"><path fill="#6b6b6b" d="M7 14H5v5h5v-2H7v-3zm-2-4h2V7h3V5H5v5zm12 7h-3v2h5v-5h-2v3zM14 5v2h3v3h2V5h-5z"/></svg>
<div style="position:absolute;left:20px;top:620px;width:1078px;height:65px;box-sizing:border-box;border:1px solid #c0c0c0;background:#fff;"><div style="position:absolute;left:0px;top:0px;width:61px;height:60px;background:#ebebeb;"></div><div style="position:absolute;left:866px;top:0px;width:1px;height:60px;background:#e8e8e8;"></div><div style="position:absolute;left:1068px;top:0px;width:7px;height:3px;background:#cfcfcf;"></div></div>
</div>
<div style="position:absolute;left:1516px;top:349px;width:7px;height:382.5px;background:#d2d2d2;"></div>
<span id="t53" class="t sans" style="left:419.70px;top:923.21px;font-size:17.94px;line-height:17.94px;font-weight:400;color:#00695c;letter-spacing:-0.020px;-webkit-text-stroke:0.6px #00695c;">Cancel</span>
<span id="t54" class="t sans" style="left:1336.25px;top:923.21px;font-size:17.94px;line-height:17.94px;font-weight:400;color:#00695c;letter-spacing:0.117px;-webkit-text-stroke:0.6px #00695c;">Preview</span>
<div style="position:absolute;left:1432.5px;top:908.5px;width:81.5px;height:46.5px;background:#00695c;border-radius:7px;"></div>
<span id="t55" class="t sans" style="left:1456.75px;top:923.81px;font-size:17.94px;line-height:17.94px;font-weight:400;color:#fff;letter-spacing:-0.075px;-webkit-text-stroke:0.55px #fff;">Add</span><div style="position:absolute;left:513.1px;top:225px;width:156.10000000000002px;height:43.80000000000001px;box-sizing:border-box;border:3.75px solid #fcc33c;border-radius:10px;background:transparent;box-shadow:0 0 5px 1px rgba(246,178,50,.5);"></div>
<div style="position:absolute;left:618.7px;top:200px;width:3.699999999999932px;height:5.599999999999994px;background:#fcc33c;"></div>
<div style="position:absolute;left:618.7px;top:211.1px;width:3.699999999999932px;height:11.900000000000006px;background:#fcc33c;"></div>
<div style="position:absolute;left:615.3px;top:220.8px;width:10.400000000000091px;height:10.399999999999977px;background:#fcc33c;border-radius:50%;"></div>
<div style="position:absolute;left:596.25px;top:127.3px;width:29.450000000000045px;height:35.39999999999999px;box-sizing:border-box;border:3.75px solid #fcc33c;border-radius:9px;background:#fff;box-shadow:0 0 5px 1px rgba(246,178,50,.5);"></div><span id="t56" class="t sans" style="left:602.50px;top:131.90px;font-size:28px;line-height:28px;font-weight:400;color:#000;letter-spacing:0.000px;">4</span>
<div style="position:absolute;left:573.6px;top:159.4px;width:357.0px;height:41.099999999999994px;box-sizing:border-box;border:3.75px solid #fcc33c;border-radius:10px;background:#fdeedd;box-shadow:0 0 5px 1px rgba(246,178,50,.5);"></div>
<span id="t57" class="t sans" style="left:581.30px;top:166.80px;font-size:28px;line-height:28px;font-weight:400;color:#000;letter-spacing:-0.004px;">Go to the &quot;Appearance&quot; tab</span>
<div style="position:absolute;left:1721px;top:86.1px;width:110px;height:51.099999999999994px;box-sizing:border-box;border:3.75px solid #fcc33c;border-radius:9.5px;background:transparent;box-shadow:0 0 5px 1px rgba(246,178,50,.5);"></div>
<div style="position:absolute;left:1741.6px;top:137px;width:3.7000000000000455px;height:10.800000000000011px;background:#fcc33c;"></div>
<div style="position:absolute;left:1741.6px;top:152.5px;width:3.7000000000000455px;height:11.5px;background:#fcc33c;"></div>
<div style="position:absolute;left:1738.2px;top:130.9px;width:10.400000000000091px;height:10.399999999999977px;background:#fcc33c;border-radius:50%;"></div>
<div style="position:absolute;left:1666.2px;top:131px;width:29.799999999999955px;height:35px;box-sizing:border-box;border:3.75px solid #fcc33c;border-radius:9px;background:#fff;box-shadow:0 0 5px 1px rgba(246,178,50,.5);"></div><span id="t58" class="t sans" style="left:1672.30px;top:135.05px;font-size:28px;line-height:28px;font-weight:400;color:#000;letter-spacing:0.000px;">7</span>
<div style="position:absolute;left:1645.1px;top:163.4px;width:265.9000000000001px;height:41.29999999999998px;box-sizing:border-box;border:3.75px solid #fcc33c;border-radius:10px;background:#fdeedd;box-shadow:0 0 5px 1px rgba(246,178,50,.5);"></div>
<span id="t59" class="t sans" style="left:1652.85px;top:170.20px;font-size:28px;line-height:28px;font-weight:400;color:#000;letter-spacing:0.053px;">Save the dashboard</span>
<svg class="ic" style="left:1280px;top:570px" width="70" height="64" viewBox="1280 570 70 64">
<defs><linearGradient id="ag" x1="0" y1="0" x2="1" y2="0"><stop offset="0" stop-color="#e0a827"/><stop offset=".22" stop-color="#fcc33c"/><stop offset="1" stop-color="#fdc740"/></linearGradient></defs>
<path d="M1338 580.600 C1322 582.300 1309.500 589.500 1301.900 600 L1311.700 604.500 C1316 596.500 1324.500 588.800 1338 586.300 Z" fill="#fcc33c"/>
<path d="M1296.600 589.800 C1299 595 1302 598.200 1306.500 600.300 L1318 606.400 C1310.500 611.500 1301.500 617.500 1294.200 622.300 C1292.900 613 1293.800 600 1296.600 589.800 Z" fill="url(#ag)" stroke="url(#ag)" stroke-width="2" stroke-linejoin="round"/>
</svg>
<div style="position:absolute;left:1357.7px;top:494.4px;width:29.0px;height:35.10000000000002px;box-sizing:border-box;border:3.75px solid #fcc33c;border-radius:9px;background:#fff;box-shadow:0 0 5px 1px rgba(246,178,50,.5);"></div><span id="t60" class="t sans" style="left:1364.05px;top:498.50px;font-size:28px;line-height:28px;font-weight:400;color:#000;letter-spacing:0.000px;">5</span>
<div style="position:absolute;left:1336.2px;top:526.2px;width:500.0px;height:75.59999999999991px;box-sizing:border-box;border:3.75px solid #fcc33c;border-radius:10px;background:#fdeedd;box-shadow:0 0 5px 1px rgba(246,178,50,.5);"></div>
<span id="t61" class="t sans" style="left:1343.80px;top:533.60px;font-size:28px;line-height:28px;font-weight:400;color:#000;letter-spacing:0.041px;">Copy the code from the documentation</span>
<span id="t62" class="t sans" style="left:1344.05px;top:567.40px;font-size:28px;line-height:28px;font-weight:400;color:#000;letter-spacing:0.039px;">and paste it into the HTML field</span>
<div style="position:absolute;left:1430.5px;top:906.2px;width:85.40000000000009px;height:50.5px;box-sizing:border-box;border:3.75px solid #fcc33c;border-radius:9.5px;background:transparent;box-shadow:0 0 5px 1px rgba(246,178,50,.5);"></div>
<div style="position:absolute;left:1520px;top:931.6px;width:7.5px;height:3.699999999999932px;background:#fcc33c;"></div>
<div style="position:absolute;left:1533.3px;top:931.6px;width:20.0px;height:3.699999999999932px;background:#fcc33c;"></div>
<div style="position:absolute;left:1559px;top:931.6px;width:9px;height:3.699999999999932px;background:#fcc33c;"></div>
<div style="position:absolute;left:1509.3px;top:928.5px;width:10.400000000000091px;height:10.400000000000091px;background:#fcc33c;border-radius:50%;"></div>
<div style="position:absolute;left:1583.7px;top:883.3px;width:29.299999999999955px;height:35.200000000000045px;box-sizing:border-box;border:3.75px solid #fcc33c;border-radius:9px;background:#fff;box-shadow:0 0 5px 1px rgba(246,178,50,.5);"></div><span id="t63" class="t sans" style="left:1590.00px;top:887.60px;font-size:28px;line-height:28px;font-weight:400;color:#000;letter-spacing:0.000px;">6</span>
<div style="position:absolute;left:1567.2px;top:915.3px;width:156.5px;height:41.40000000000009px;box-sizing:border-box;border:3.75px solid #fcc33c;border-radius:10px;background:#fdeedd;box-shadow:0 0 5px 1px rgba(246,178,50,.5);"></div>
<span id="t64" class="t sans" style="left:1575.00px;top:922.90px;font-size:28px;line-height:28px;font-weight:400;color:#000;letter-spacing:-0.020px;">Click &quot;Add&quot;</span>
</body>
</html>
